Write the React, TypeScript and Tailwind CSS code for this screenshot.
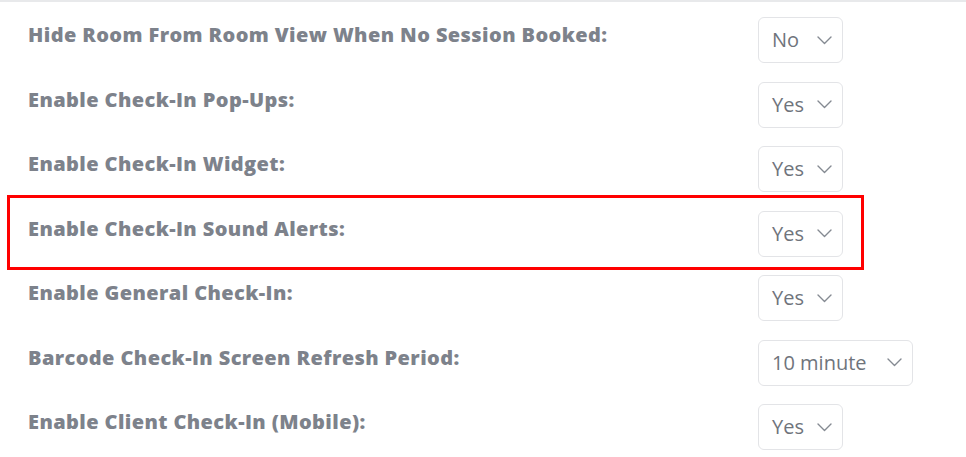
const settings = [
  { label: 'Hide Room From Room View When No Session Booked:', value: 'No' },
  { label: 'Enable Check-In Pop-Ups:', value: 'Yes' },
  { label: 'Enable Check-In Widget:', value: 'Yes' },
  { label: 'Enable Check-In Sound Alerts:', value: 'Yes', highlight: true },
  { label: 'Enable General Check-In:', value: 'Yes' },
  { label: 'Barcode Check-In Screen Refresh Period:', value: '10 minute', wide: true },
  { label: 'Enable Client Check-In (Mobile):', value: 'Yes' },
];

function Chevron() {
  return (
    <svg width="15" height="9" viewBox="0 0 15 9" fill="none" className="text-[#858a92]">
      <path d="M1 1l6.5 6.5L14 1" stroke="currentColor" strokeWidth="1.4" strokeLinecap="round" strokeLinejoin="round" />
    </svg>
  );
}

function Select({ value, wide }: { value: string; wide?: boolean }) {
  return (
    <div
      className={`flex h-[46px] items-center justify-between rounded-md border border-[#e3e4e7] bg-white pl-[13px] pr-[10px] ${
        wide ? 'w-[155px]' : 'w-[85px]'
      }`}
    >
      <span className="text-[20px] leading-none text-[#6f747c]">{value}</span>
      <Chevron />
    </div>
  );
}

export default function App() {
  return (
    <div
      className="h-[457px] w-[966px] overflow-hidden border-t-2 border-[#e8e9eb] bg-white"
      style={{ fontFamily: '"Open Sans", Lato, sans-serif' }}
    >
      <div className="flex flex-col pt-[15px]">
        {settings.map((s) => (
          <div key={s.label} className="relative grid h-[64.5px] grid-cols-[730px_auto] pl-[28px]">
            <div className="pt-[4px] text-[20px] font-extrabold leading-[28px] tracking-[0.4px] text-[#7d828b]">
              {s.label}
            </div>
            <div>
              <Select value={s.value} wide={s.wide} />
            </div>
            {s.highlight && (
              <div className="pointer-events-none absolute left-[7px] top-[-16px] h-[75px] w-[857px] border-[3px] border-[#ff0000]" />
            )}
          </div>
        ))}
      </div>
    </div>
  );
}
